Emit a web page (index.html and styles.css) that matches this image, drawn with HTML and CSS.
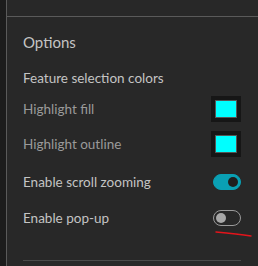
FILE: index.html
```html
<!DOCTYPE html>
<html>
	<head>
		<meta charset="utf-8">
		<title>Options</title>
		<link rel="stylesheet" href="styles.css">
	</head>
	<body>
		<div class="rail"></div>
		<div class="panel">
			<div class="panel_top"></div>
			<div class="section">
				<h2 class="title">Options</h2>
				<div class="label group">Feature selection colors</div>

				<div class="row first">
					<span class="label dim">Highlight fill</span>
					<span class="swatch"><span class="swatch_color"></span></span>
				</div>
				<div class="row">
					<span class="label dim">Highlight outline</span>
					<span class="swatch"><span class="swatch_color"></span></span>
				</div>
				<div class="row toggle_row first_toggle">
					<span class="label">Enable scroll zooming</span>
					<span class="toggle on"><span class="knob"></span></span>
				</div>
				<div class="row toggle_row">
					<span class="label">Enable pop-up</span>
					<span class="toggle"><span class="knob"></span></span>
					<svg class="scribble" width="40" height="8" viewBox="0 0 40 8">
						<path d="M3 2 C 14 3, 25 4, 38 6" stroke="#e3141b" stroke-width="1.4" fill="none" stroke-linecap="round"/>
					</svg>
				</div>
				<div class="divider"></div>
			</div>
		</div>
	</body>
</html>
```

FILE: styles.css
```css
:root {
	--bg: #282828;
	--rail: #1c1c1c;
	--line: #5a5a5a;
	--text: #c4c4c4;
	--dim: #9a9a9a;
	--teal: #0aa0b4;
}

body {
	margin: 0;
	height: 266px;
	display: flex;
	background-color: var(--bg);
	font-family: 'Lato', sans-serif;
	overflow: hidden;
}

.rail {
	width: 6px;
	background-color: var(--rail);
	border-right: 1px solid var(--line);
}

.panel {
	flex: 1;
}

.panel_top {
	height: 16px;
	border-bottom: 1px solid var(--line);
}

.section {
	padding: 0 17px 0 16px;
}

.title {
	margin: 15px 0 0;
	font-size: 15px;
	font-weight: normal;
	color: var(--text);
	line-height: 20px;
}

.label {
	font-size: 13.5px;
	color: var(--text);
	line-height: 18px;
}

.group {
	margin-top: 17px;
}

.dim {
	color: var(--dim);
}

.row {
	position: relative;
	display: flex;
	align-items: center;
	justify-content: space-between;
	height: 35px;
}

.row.first {
	margin-top: 4px;
}

.swatch {
	width: 30px;
	height: 26px;
	box-sizing: border-box;
	background-color: #161616;
	padding: 4px;
}

.swatch_color {
	display: block;
	height: 100%;
	box-sizing: border-box;
	background-color: #00ffff;
	border: 1px solid #555;
}

.toggle_row {
	height: 36px;
}

.toggle_row.first_toggle {
	margin-top: 3px;
}

.toggle {
	width: 28px;
	height: 16px;
	box-sizing: border-box;
	border-radius: 8px;
	border: 1px solid #9a9a9a;
	display: flex;
	align-items: center;
	padding: 0 2px;
}

.toggle .knob {
	width: 10px;
	height: 10px;
	border-radius: 50%;
	background-color: #a8a8a8;
}

.toggle.on {
	background-color: var(--teal);
	border-color: var(--teal);
	justify-content: flex-end;
}

.toggle.on .knob {
	background-color: #1f1f1f;
}

.scribble {
	position: absolute;
	right: -12px;
	bottom: -2px;
}

.divider {
	margin-top: 24px;
	border-top: 1px solid #4a4a4a;
}
```
